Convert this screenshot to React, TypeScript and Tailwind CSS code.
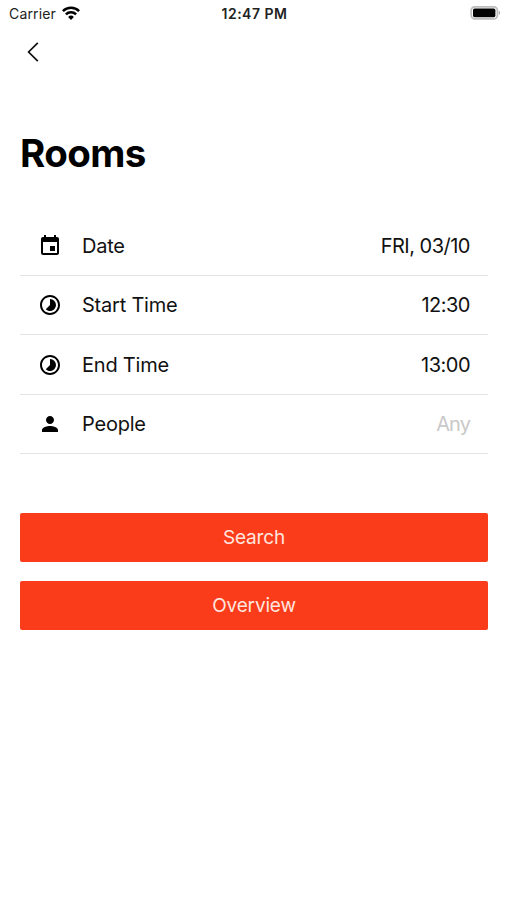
import type { ReactNode } from 'react';
import { MdEvent, MdPerson, MdTimelapse } from 'react-icons/md';

function StatusBar() {
  return (
    <div className="grid h-[27px] grid-cols-3 items-center pl-[9px] pr-[6px] text-[#222]">
      <div className="flex items-center gap-[6px]">
        <span className="text-[14px] tracking-[0.15px]">Carrier</span>
        <svg className="-mt-[2px]" width="18" height="14" viewBox="0 0 18 14" fill="none" stroke="#000" strokeWidth="2.5">
          <path d="M0.9 5.2a11.5 11.5 0 0 1 16.2 0" />
          <path d="M3.9 8.3a7.2 7.2 0 0 1 10.2 0" />
          <path d="M9 13.9L6.1 11a4.1 4.1 0 0 1 5.8 0z" fill="#000" stroke="none" />
        </svg>
      </div>
      <span className="pr-px text-center text-[14px] font-semibold tracking-[0.5px]">12:47 PM</span>
      <svg className="-mt-px justify-self-end" width="31" height="14" viewBox="0 0 31 14">
        <rect x="1.2" y="0.9" width="26.2" height="12" rx="3.6" fill="#fff" stroke="#bdbdbd" strokeWidth="1.8" />
        <rect x="3" y="2.6" width="22.4" height="8.6" rx="1.6" fill="#000" />
        <path d="M28.8 4.8c1.8.7 1.8 3.5 0 4.2z" fill="#aaa" />
      </svg>
    </div>
  );
}

function Row({ icon, label, value, muted }: { icon: ReactNode; label: string; value: string; muted?: boolean }) {
  return (
    <div className="flex h-[59.5px] items-center border-b border-[#e4e4e4] pl-[18px] pr-[18px] pt-px text-[20px]">
      <span className="w-[44px] text-[24px] text-black">{icon}</span>
      <span className="flex-1 tracking-[-0.22px] text-[#111]">{label}</span>
      <span className={muted ? 'tracking-[-0.9px] text-[#c9c9c9]' : 'tracking-[-0.5px] text-[#111]'}>{value}</span>
    </div>
  );
}

function Button({ children }: { children: ReactNode }) {
  return (
    <button className="h-[49px] w-full rounded-[2px] bg-[#fb3c1b] pt-[2px] text-[19px] tracking-[-0.15px] text-[#ffe5df]">
      {children}
    </button>
  );
}

export default function App() {
  return (
    <div className="h-[900px] w-[507px] bg-white font-['Inter',sans-serif]">
      <StatusBar />

      <header className="flex h-[50px] items-center pl-[27px]">
        <svg width="13" height="20" viewBox="0 0 13 20" fill="none" stroke="#111" strokeWidth="1.7">
          <path d="M10.8 0.8L1.6 10l9.2 9.2" />
        </svg>
      </header>

      <main className="pl-5 pr-[19px] pt-[52px]">
        <h1 className="h-12 text-[38.5px] leading-12 font-bold tracking-[-0.6px] text-black">Rooms</h1>

        <div className="mt-[39px]">
          <Row icon={<MdEvent />} label="Date" value="FRI, 03/10" />
          <Row icon={<MdTimelapse />} label="Start Time" value="12:30" />
          <Row icon={<MdTimelapse />} label="End Time" value="13:00" />
          <Row icon={<MdPerson />} label="People" value="Any" muted />
        </div>

        <div className="mt-[58.5px] flex flex-col gap-[19.5px]">
          <Button>Search</Button>
          <Button>Overview</Button>
        </div>
      </main>
    </div>
  );
}
